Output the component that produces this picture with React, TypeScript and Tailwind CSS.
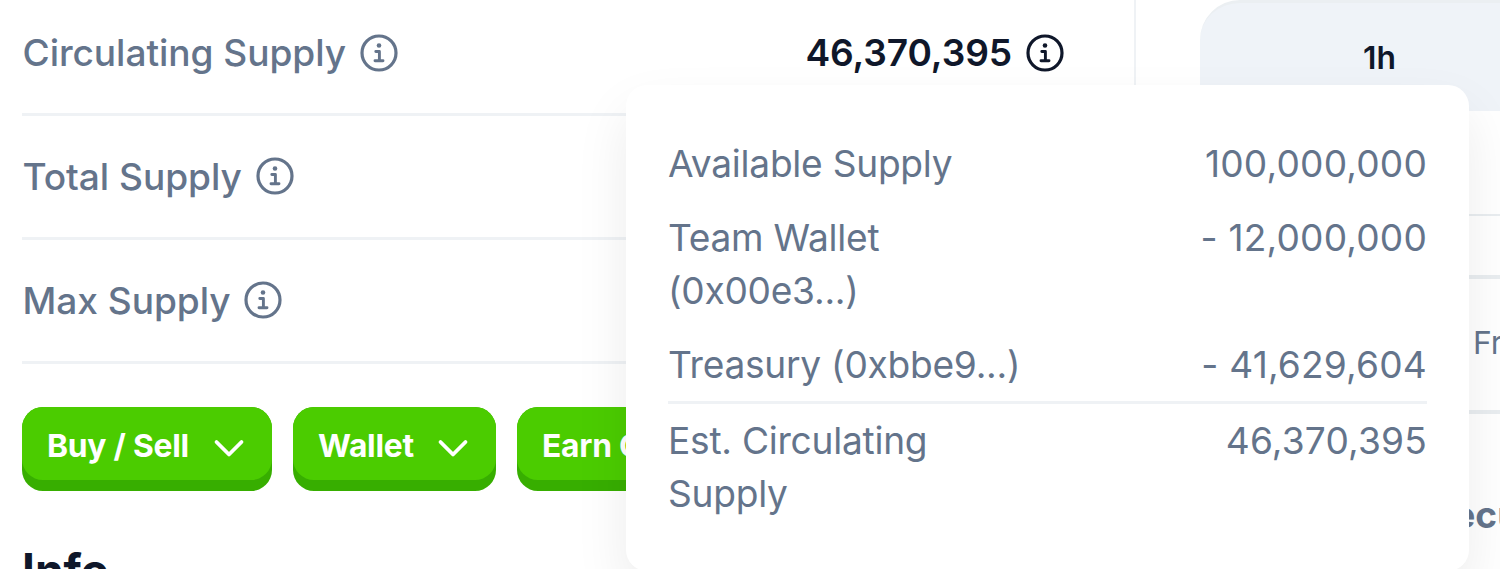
import clsx from "clsx";
import type { ReactElement, ReactNode } from "react";

const breakdown = [
  { label: "Available Supply", value: "100,000,000" },
  { label: "Team Wallet (0x00e3...)", value: "- 12,000,000" },
  { label: "Treasury (0xbbe9...)", value: "- 41,629,604" },
];

export default function App(): ReactElement {
  return (
    <div className="relative flex h-[569px] w-[1500px] overflow-hidden bg-white font-['Inter',sans-serif] text-[#64748b]">
      <main className="flex w-[1136px] shrink-0 flex-col border-r-2 border-[#eff2f5] pr-[70px] pl-[22px]">
        <StatRow label="Circulating Supply" first>
          <span className="flex items-center gap-[14px] text-[37.1px] font-semibold tracking-[-0.1px] text-[#0f172a]">
            46,370,395
            <InfoIcon />
          </span>
        </StatRow>
        <StatRow label="Total Supply" />
        <StatRow label="Max Supply" />

        <div className="mt-[42.5px] flex gap-[21px]">
          <MenuButton label="Buy / Sell" className="w-[250px]" />
          <MenuButton label="Wallet" className="w-[203px]" />
          <MenuButton label="Earn Crypto" className="w-[290px]" />
        </div>

        <h2 className="mt-[53px] text-[46px] leading-[53px] font-bold text-[#0f172a]">
          Info
        </h2>
      </main>

      <PriceChanges />
      <SupplyTooltip />
    </div>
  );
}

function StatRow({
  label,
  first = false,
  children,
}: {
  label: string;
  first?: boolean;
  children?: ReactNode;
}): ReactElement {
  return (
    <div
      className={clsx(
        "flex shrink-0 items-center justify-between border-b-[3px] border-[#eff2f5]",
        first ? "h-[116px] pb-[7px]" : "h-[124px]",
      )}
    >
      <span className="flex items-center gap-[14px] pl-[0.5px] text-[37.1px] font-medium tracking-[-0.05px]">
        {label}
        <InfoIcon />
      </span>
      {children}
    </div>
  );
}

function MenuButton({
  label,
  className,
}: {
  label: string;
  className: string;
}): ReactElement {
  return (
    <button
      type="button"
      className={clsx(
        "h-[84px] shrink-0 rounded-[21px] bg-[#37ae00] pb-[10.6px]",
        className,
      )}
    >
      <span className="flex h-full items-center justify-between rounded-[21px] bg-[#4bcc00] px-[25px] pt-[5px] text-[31.8px] font-bold tracking-[-0.25px] whitespace-nowrap text-white">
        {label}
        <svg viewBox="0 0 32 32" className="mt-[2px] mr-[2px] size-8 shrink-0" fill="none">
          <path
            d="M3.5 11 16 23.500 28.500 11"
            stroke="currentColor"
            strokeWidth="3.8"
            strokeLinecap="round"
            strokeLinejoin="round"
          />
        </svg>
      </span>
    </button>
  );
}

function PriceChanges(): ReactElement {
  return (
    <aside className="flex w-[364px] shrink-0 flex-col pl-[64px]">
      <div className="flex h-[111px] w-[360px] shrink-0 rounded-tl-[40px] border-t-[3px] border-[#ebeff2] bg-[#eff3f8] pt-[28px] pl-[163px] text-[31.8px] leading-[53px] font-semibold text-[#0f172a]">
        1h
      </div>
      <div className="h-[105px] shrink-0 border-b-[2.6px] border-[#e9edf0]" />
      <div className="h-[63px] shrink-0 border-b-4 border-[#e9edf0]" />
      <div className="flex h-[135px] shrink-0 items-center border-b-4 border-[#e9edf0] pb-[4px] pl-[273px] text-[31.8px] whitespace-nowrap">
        From
      </div>
      <div className="pt-[74px] pl-[229px] text-[37.1px] leading-[53px] font-bold whitespace-nowrap">
        Security
      </div>
    </aside>
  );
}

function SupplyTooltip(): ReactElement {
  return (
    <div className="absolute top-[85px] left-[626px] h-[486px] w-[843px] rounded-[21px] bg-white px-[42px] pt-[52px] text-[37.1px] leading-[53px] shadow-[0_26px_54px_rgba(0,0,0,0.08)]">
      <div className="flex flex-col gap-[21px]">
        {breakdown.map((row) => (
          <TooltipRow key={row.label} {...row} />
        ))}
      </div>
      <div className="mt-[10px] border-t-[3px] border-[#eff2f5] pt-[10px]">
        <TooltipRow label="Est. Circulating Supply" value="46,370,395" />
      </div>
    </div>
  );
}

function TooltipRow({
  label,
  value,
}: {
  label: string;
  value: string;
}): ReactElement {
  return (
    <div className="flex justify-between">
      <span className="w-[358px] tracking-[-0.24px]">{label}</span>
      <span className="tracking-[0.2px] whitespace-nowrap">{value}</span>
    </div>
  );
}

function InfoIcon(): ReactElement {
  return (
    <svg viewBox="0 0 38 38" className="size-[38px] shrink-0" fill="none">
      <circle cx="19" cy="19" r="17" stroke="currentColor" strokeWidth="3.200" />
      <circle cx="19" cy="11.500" r="2.300" fill="currentColor" />
      <path
        d="M15.800 17.500H19.400V26.700M15 26.700H23"
        stroke="currentColor"
        strokeWidth="2.900"
        strokeLinecap="round"
        strokeLinejoin="round"
      />
    </svg>
  );
}
